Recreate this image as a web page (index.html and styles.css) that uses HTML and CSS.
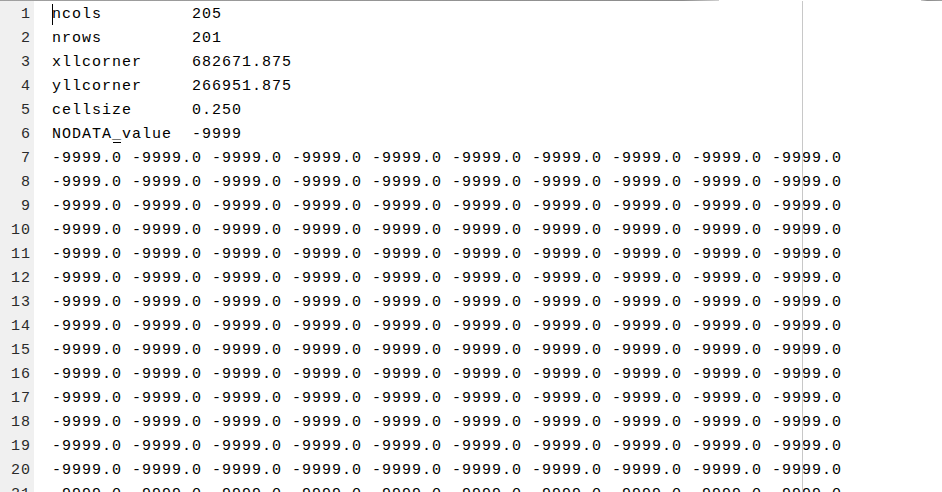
FILE: index.html
```html
<!DOCTYPE html>
<html>
<head>
<meta charset="utf-8">
<link rel="stylesheet" href="styles.css">
</head>
<body>
<div class="topbar">
  <div class="shade shade-left"></div>
  <div class="shade-gap"></div>
  <div class="shade shade-right"></div>
</div>
<div class="editor">
  <div class="gutter">
    <div class="ln">1</div><div class="ln">2</div><div class="ln">3</div><div class="ln">4</div><div class="ln">5</div><div class="ln">6</div><div class="ln">7</div><div class="ln">8</div><div class="ln">9</div><div class="ln">10</div><div class="ln">11</div><div class="ln">12</div><div class="ln">13</div><div class="ln">14</div><div class="ln">15</div><div class="ln">16</div><div class="ln">17</div><div class="ln">18</div><div class="ln">19</div><div class="ln">20</div><div class="ln">21</div>
  </div>
  <div class="code">
    <div class="line">ncols         205</div>
    <div class="line">nrows         201</div>
    <div class="line">xllcorner     682671.875</div>
    <div class="line">yllcorner     266951.875</div>
    <div class="line">cellsize      0.250</div>
    <div class="line">NODATA_value  -9999</div>
    <div class="line">-9999.0 -9999.0 -9999.0 -9999.0 -9999.0 -9999.0 -9999.0 -9999.0 -9999.0 -9999.0</div>
    <div class="line">-9999.0 -9999.0 -9999.0 -9999.0 -9999.0 -9999.0 -9999.0 -9999.0 -9999.0 -9999.0</div>
    <div class="line">-9999.0 -9999.0 -9999.0 -9999.0 -9999.0 -9999.0 -9999.0 -9999.0 -9999.0 -9999.0</div>
    <div class="line">-9999.0 -9999.0 -9999.0 -9999.0 -9999.0 -9999.0 -9999.0 -9999.0 -9999.0 -9999.0</div>
    <div class="line">-9999.0 -9999.0 -9999.0 -9999.0 -9999.0 -9999.0 -9999.0 -9999.0 -9999.0 -9999.0</div>
    <div class="line">-9999.0 -9999.0 -9999.0 -9999.0 -9999.0 -9999.0 -9999.0 -9999.0 -9999.0 -9999.0</div>
    <div class="line">-9999.0 -9999.0 -9999.0 -9999.0 -9999.0 -9999.0 -9999.0 -9999.0 -9999.0 -9999.0</div>
    <div class="line">-9999.0 -9999.0 -9999.0 -9999.0 -9999.0 -9999.0 -9999.0 -9999.0 -9999.0 -9999.0</div>
    <div class="line">-9999.0 -9999.0 -9999.0 -9999.0 -9999.0 -9999.0 -9999.0 -9999.0 -9999.0 -9999.0</div>
    <div class="line">-9999.0 -9999.0 -9999.0 -9999.0 -9999.0 -9999.0 -9999.0 -9999.0 -9999.0 -9999.0</div>
    <div class="line">-9999.0 -9999.0 -9999.0 -9999.0 -9999.0 -9999.0 -9999.0 -9999.0 -9999.0 -9999.0</div>
    <div class="line">-9999.0 -9999.0 -9999.0 -9999.0 -9999.0 -9999.0 -9999.0 -9999.0 -9999.0 -9999.0</div>
    <div class="line">-9999.0 -9999.0 -9999.0 -9999.0 -9999.0 -9999.0 -9999.0 -9999.0 -9999.0 -9999.0</div>
    <div class="line">-9999.0 -9999.0 -9999.0 -9999.0 -9999.0 -9999.0 -9999.0 -9999.0 -9999.0 -9999.0</div>
    <div class="line">-9999.0 -9999.0 -9999.0 -9999.0 -9999.0 -9999.0 -9999.0 -9999.0 -9999.0 -9999.0</div>
    <div class="caret"></div>
    <div class="marker"></div>
    <div class="edge"></div>
  </div>
</div>
</body>
</html>
```
FILE: styles.css
```css
html, body {
  margin: 0;
  padding: 0;
  background: #ffffff;
  overflow: hidden;
  width: 942px;
  height: 492px;
}
.topbar {
  display: flex;
  height: 1px;
}
.shade {
  height: 1px;
  background: #9a9a9a;
}
.shade-left {
  width: 719px;
  background: linear-gradient(to right, #a0a0a0 0, #8c8c8c 95%, #d0d0d0 100%);
}
.shade-gap {
  flex: 1;
}
.shade-right {
  width: 21px;
  background: linear-gradient(to right, #d0d0d0 0, #8c8c8c 30%, #a0a0a0 100%);
}
.editor {
  display: flex;
  height: 491px;
  font-family: "Liberation Mono", "Courier New", monospace;
  font-size: 15px;
  color: #000000;
}
.gutter {
  width: 34px;
  background: #f0f0f0;
  padding-top: 2px;
  box-sizing: border-box;
  flex: none;
}
.ln {
  height: 24px;
  line-height: 24px;
  text-align: right;
  padding-right: 4px;
  color: #2b2b2b;
  letter-spacing: 1px;
  margin-right: -1px;
}
.code {
  position: relative;
  flex: 1;
  padding-top: 2px;
  padding-left: 18px;
}
.line {
  height: 24px;
  line-height: 24px;
  white-space: pre;
  letter-spacing: 1px;
}
.caret {
  position: absolute;
  left: 18px;
  top: 3px;
  width: 1px;
  height: 21px;
  background: #000000;
}
.marker {
  position: absolute;
  left: 79px;
  top: 141px;
  width: 8px;
  height: 1px;
  background: #000000;
}
.edge {
  position: absolute;
  left: 768px;
  top: 0;
  width: 1px;
  height: 100%;
  background: #c8c8c8;
}
```
